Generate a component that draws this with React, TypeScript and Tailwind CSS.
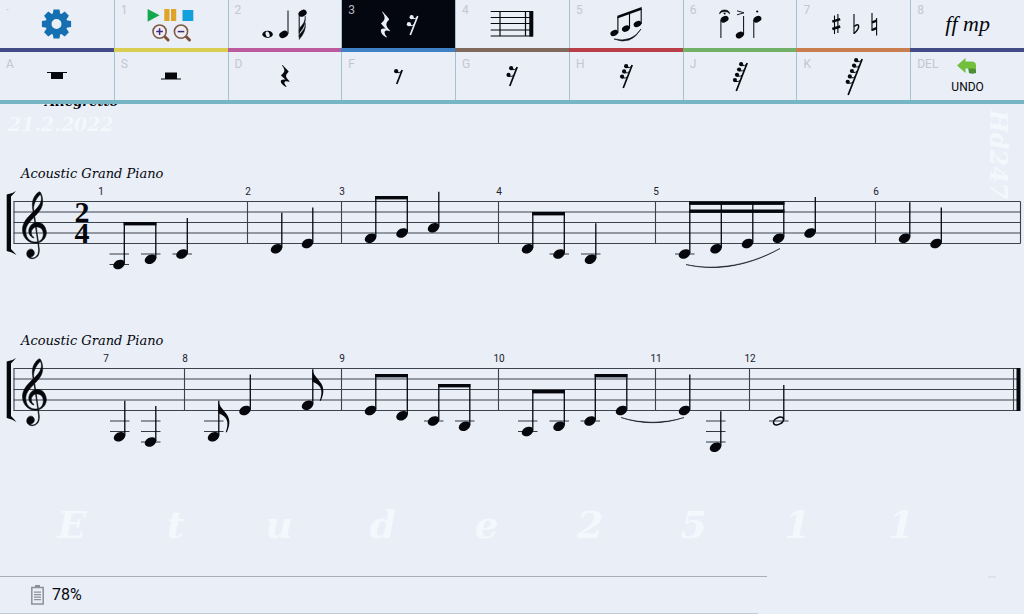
import type { ReactNode } from 'react';

type BeamGroup = { notes: number[]; tops: number[] };

interface Note {
  x: number;
  // Steps above the bottom staff line, negative below it
  step: number;
  kind?: 'quarter' | 'eighth' | 'half' | 'beamed';
}

interface System {
  notes: Note[];
  beams: BeamGroup[];
  barlines: number[];
  measures: { label: string; x: number }[];
  slur: string;
  timeSignature?: [string, string];
  final?: boolean;
}

interface Tool {
  hotkey: string;
  label: string;
  icon: ReactNode;
  line?: string;
  active?: boolean;
}

const STAFF_TOP = 17.5;
const STEP = 5.25;
const STEM = 36;
const noteY = (step: number) => STAFF_TOP + 8 * STEP - step * STEP;

const CLEF_PATH =
  'm12.049 3.5296c0.305 3.1263-2.019 5.6563-4.0772 7.7014-0.9349 0.897-0.155 0.148-0.6437 0.594-0.1022-0.479-0.2986-1.731-0.2802-2.11 0.1304-2.6939 2.3198-6.5875 4.2381-8.0236 0.309 0.5767 0.563 0.6231 0.763 1.8382zm0.651 16.142c-1.232-0.906-2.85-1.144-4.3336-0.885-0.1913-1.255-0.3827-2.51-0.574-3.764 2.3506-2.329 4.9066-5.0322 5.0406-8.5394 0.059-2.232-0.276-4.6714-1.678-6.4836-1.7004 0.12823-2.8995 2.156-3.8019 3.4165-1.4889 2.6705-1.1414 5.9169-0.57 8.7965-0.8094 0.952-1.9296 1.743-2.7274 2.734-2.3561 2.308-4.4085 5.43-4.0046 8.878 0.18332 3.334 2.5894 6.434 5.8702 7.227 1.2457 0.315 2.5639 0.346 3.8241 0.099 0.2199 2.25 1.0266 4.629 0.0925 6.813-0.7007 1.598-2.7875 3.004-4.3325 2.192-0.5994-0.316-0.1137-0.051-0.478-0.252 1.0698-0.257 1.9996-1.036 2.26-1.565 0.8378-1.464-0.3998-3.639-2.1554-3.358-2.262 0.046-3.1904 3.14-1.7356 4.685 1.3468 1.52 3.833 1.312 5.4301 0.318 1.8125-1.18 2.0395-3.544 1.8325-5.562-0.07-0.678-0.403-2.67-0.444-3.387 0.697-0.249 0.209-0.059 1.193-0.449 2.66-1.053 4.357-4.259 3.594-7.122-0.318-1.469-1.044-2.914-2.302-3.792zm0.561 5.757c0.214 1.991-1.053 4.321-3.079 4.96-0.136-0.795-0.172-1.011-0.2626-1.475-0.4822-2.46-0.744-4.987-1.116-7.481 1.6246-0.168 3.4576 0.543 4.0226 2.184 0.244 0.577 0.343 1.197 0.435 1.812zm-5.1486 5.196c-2.5441 0.141-4.9995-1.595-5.6343-4.081-0.749-2.153-0.5283-4.63 0.8207-6.504 1.1151-1.702 2.6065-3.105 4.0286-4.543 0.183 1.127 0.366 2.254 0.549 3.382-2.9906 0.782-5.0046 4.725-3.215 7.451 0.5324 0.764 1.9765 2.223 2.7655 1.634-1.102-0.683-2.0033-1.859-1.8095-3.227-0.0821-1.282 1.3699-2.911 2.6513-3.198 0.4384 2.869 0.9413 6.073 1.3797 8.943-0.5054 0.1-1.0211 0.143-1.536 0.143z';

const QUARTER_REST_PATH =
  'M2.6 0C4 2 8.6 7 8.7 7.8C8.6 9 6 10.5 6 13C6 15 8 17.4 9.7 19.4L9.3 19.8C6.5 18.6 4.6 19 4.4 20.8C4.3 22.5 5.4 24 6.6 25.4L6 26C3 24 .8 21.6 .8 19.4C.8 17.6 2.4 16.6 5.6 17.4C4 15.4 1.6 13.2 .9 12C2.6 10.8 4.4 8.6 4.4 6.6C4.4 4.4 3 2.2 2 .6Z';

const systems: System[] = [
  {
    notes: [
      { x: 119, step: -4, kind: 'beamed' },
      { x: 150.5, step: -3, kind: 'beamed' },
      { x: 182, step: -2 },
      { x: 276.5, step: -1 },
      { x: 307.5, step: 0 },
      { x: 370.5, step: 1, kind: 'beamed' },
      { x: 402, step: 2, kind: 'beamed' },
      { x: 433.5, step: 3 },
      { x: 527.5, step: -1, kind: 'beamed' },
      { x: 559, step: -2, kind: 'beamed' },
      { x: 590.5, step: -3 },
      { x: 684.5, step: -2, kind: 'beamed' },
      { x: 716, step: -1, kind: 'beamed' },
      { x: 747.5, step: 0, kind: 'beamed' },
      { x: 778.5, step: 1, kind: 'beamed' },
      { x: 810, step: 2 },
      { x: 904.5, step: 1 },
      { x: 936, step: 0 },
    ],
    beams: [
      { notes: [0, 1], tops: [38] },
      { notes: [5, 6], tops: [12] },
      { notes: [8, 9], tops: [28] },
      { notes: [11, 12, 13, 14], tops: [17.5, 25.5] },
    ],
    barlines: [247.5, 341.5, 498.5, 655.5, 875.5, 1020.5],
    measures: [
      { label: '1', x: 101 },
      { label: '2', x: 248 },
      { label: '3', x: 342 },
      { label: '4', x: 499 },
      { label: '5', x: 656 },
      { label: '6', x: 876 },
    ],
    slur: 'M686 80.5C710 86.5 744 85 780 64.5C744 84.2 710 85.7 686 80.5Z',
    timeSignature: ['2', '4'],
  },
  {
    notes: [
      { x: 119.5, step: -5 },
      { x: 150.5, step: -6 },
      { x: 213.5, step: -5, kind: 'eighth' },
      { x: 245, step: 0 },
      { x: 307.5, step: 1, kind: 'eighth' },
      { x: 370.5, step: 0, kind: 'beamed' },
      { x: 402, step: -1, kind: 'beamed' },
      { x: 433.5, step: -2, kind: 'beamed' },
      { x: 464.5, step: -3, kind: 'beamed' },
      { x: 527.5, step: -4, kind: 'beamed' },
      { x: 559, step: -3, kind: 'beamed' },
      { x: 590, step: -2, kind: 'beamed' },
      { x: 621.5, step: 0, kind: 'beamed' },
      { x: 684.5, step: 0 },
      { x: 715.5, step: -7 },
      { x: 778.5, step: -2, kind: 'half' },
    ],
    beams: [
      { notes: [5, 6], tops: [23] },
      { notes: [7, 8], tops: [33] },
      { notes: [9, 10], tops: [39] },
      { notes: [11, 12], tops: [23] },
    ],
    barlines: [184.5, 341.5, 498.5, 655.5, 749.5],
    measures: [
      { label: '7', x: 106 },
      { label: '8', x: 185 },
      { label: '9', x: 342 },
      { label: '10', x: 499 },
      { label: '11', x: 656 },
      { label: '12', x: 750 },
    ],
    slur: 'M621 66.5C641 73.5 664 73.5 684 66.5C664 72.7 641 72.7 621 66.5Z',
    final: true,
  },
];

function NoteHead({ x, y, r = 6.1 }: { x: number; y: number; r?: number }) {
  return <ellipse cx={x} cy={y} rx={r} ry={r * 0.72} transform={`rotate(-28 ${x} ${y})`} />;
}

function ScoreNote({ note, stemTop }: { note: Note; stemTop: number }) {
  const y = noteY(note.step);
  const stemX = note.x + 5.3;
  const ledgers: number[] = [];
  for (let s = -2; s >= note.step; s -= 2) ledgers.push(noteY(s));

  return (
    <g>
      {ledgers.map((ly) => (
        <path key={ly} d={`M${note.x - 9.5} ${ly}h19.5`} stroke="#333a44" strokeWidth={1} />
      ))}
      {note.kind === 'half' ? (
        <ellipse
          cx={note.x}
          cy={y}
          rx={5.4}
          ry={3.3}
          fill="none"
          stroke="#05070d"
          strokeWidth={1.6}
          transform={`rotate(-28 ${note.x} ${y})`}
        />
      ) : (
        <NoteHead x={note.x} y={y} />
      )}
      <path d={`M${stemX} ${y - 1}V${stemTop}`} stroke="#05070d" strokeWidth={1.3} />
      {note.kind === 'eighth' && (
        <path
          d={`M${stemX - 0.4} ${stemTop}c1.500 11 17 13 8.500 31.500h-1.200c4-11 1-16-7.300-19Z`}
        />
      )}
    </g>
  );
}

function Staff({ system }: { system: System }) {
  const bottom = STAFF_TOP + 8 * STEP;
  const end = system.final ? 1019.5 : 1020.5;

  const stemTopOf = (index: number) => {
    const beam = system.beams.find((b) => b.notes.includes(index));
    return beam ? beam.tops[0] : noteY(system.notes[index].step) - STEM;
  };

  return (
    <svg viewBox="0 0 1024 110" className="block w-full" fill="#05070d" role="img" aria-label="Staff">
      {/* Staff and bar lines */}
      <g stroke="#3c434d" strokeWidth={1.1}>
        {[0, 2, 4, 6, 8].map((i) => (
          <path key={i} d={`M13.500 ${STAFF_TOP + i * STEP}H${end}`} />
        ))}
        <path d={`M14 ${STAFF_TOP}V${bottom}`} />
        {system.barlines.map((x) => (
          <path key={x} d={`M${x} ${STAFF_TOP}V${bottom}`} />
        ))}
        {system.final && <path d={`M1013.500 ${STAFF_TOP}V${bottom}`} />}
      </g>
      {system.final && <rect x={1016.5} y={STAFF_TOP - 0.5} width={4} height={43} />}

      {/* Bracket and clef */}
      <path d="M6.700 10.500Q12 10 16 7Q13 10.500 11 12.500V65Q13 67 16.500 71Q12 68 6.700 67Z" />
      <path d={CLEF_PATH} transform="translate(22.500 7.800) scale(1.570 1.640)" stroke="#05070d" strokeWidth={0.35} />
      {system.timeSignature && (
        <g fontFamily="Liberation Serif, serif" fontWeight="bold" fontSize={30} textAnchor="middle">
          <text x={82} y={38}>{system.timeSignature[0]}</text>
          <text x={82} y={59}>{system.timeSignature[1]}</text>
        </g>
      )}

      <g fontFamily="Roboto, sans-serif" fontSize={10} textAnchor="middle" fill="#1d2129">
        {system.measures.map((m) => (
          <text key={m.label} x={m.x} y={11}>{m.label}</text>
        ))}
      </g>

      {system.notes.map((note, i) => (
        <ScoreNote key={note.x} note={note} stemTop={stemTopOf(i)} />
      ))}
      {system.beams.map((beam) =>
        beam.tops.map((top) => {
          const from = system.notes[beam.notes[0]].x + 4.7;
          const to = system.notes[beam.notes[beam.notes.length - 1]].x + 5.9;
          return <rect key={`${from}-${top}`} x={from} y={top} width={to - from} height={3.4} />;
        })
      )}
      <path d={system.slur} stroke="#05070d" strokeWidth={0.5} />
    </svg>
  );
}

// Slanted rest with one hook per flag
function FlaggedRest({ flags, gap, width, height }: { flags: number; gap: number; width: number; height: number }) {
  const topX = width - 0.8;
  const slope = 0.39;
  return (
    <g fill="currentColor" stroke="currentColor">
      <path d={`M${topX} 1L${topX - slope * (height - 1)} ${height}`} strokeWidth={1.7} fill="none" />
      {Array.from({ length: flags }, (_, i) => {
        const y = 2.2 + i * gap;
        const stemX = topX - slope * (y - 1);
        const x = stemX - 5.6;
        return (
          <g key={i}>
            <circle cx={x} cy={y} r={2.1} stroke="none" />
            <path d={`M${x} ${y + 1.4}Q${x + 4} ${y + 2} ${stemX} ${y}`} strokeWidth={1} fill="none" />
          </g>
        );
      })}
    </g>
  );
}

function RestIcon(props: { flags: number; gap: number; width: number; height: number }) {
  return (
    <svg width={props.width} height={props.height} viewBox={`0 0 ${props.width} ${props.height}`} overflow="visible">
      <FlaggedRest {...props} />
    </svg>
  );
}

function Icon({ children }: { children: ReactNode }) {
  return (
    <svg width="60" height="40" viewBox="0 0 60 40" fill="currentColor">
      {children}
    </svg>
  );
}

const Magnifier = ({ x, plus }: { x: number; plus?: boolean }) => (
  <g fill="none">
    <path d={`M${x + 4.5} 32l4 4`} stroke="#7d4f3a" strokeWidth={3} strokeLinecap="round" />
    <circle cx={x} cy={27.6} r={6.6} stroke="#7d5a45" strokeWidth={1.6} fill="#f1eef2" />
    <path d={plus ? `M${x - 3.3} 27.600h6.600M${x} 24.300v6.600` : `M${x - 3.3} 27.600h6.600`} stroke="#3d2a80" strokeWidth={1.5} />
  </g>
);

const topTools: Tool[] = [
  {
    hotkey: '·',
    label: 'Settings',
    line: 'border-[#434b88]',
    icon: (
      <Icon>
        <g fill="#1470b0">
          {[0, 45, 90, 135].map((a) => (
            <path key={a} d="M26.500 5.400h6l.8 5h-7.600zM26.500 34.600h6l.8-5h-7.600z" transform={`rotate(${a} 29.5 20)`} />
          ))}
        </g>
        <circle cx="29.5" cy="20" r="8" fill="none" stroke="#1470b0" strokeWidth="6" />
      </Icon>
    ),
  },
  {
    hotkey: '1',
    label: 'Playback and zoom',
    line: 'border-[#d9cd52]',
    icon: (
      <Icon>
        <path d="M6.600 5L18.500 11.300L6.600 17.700Z" fill="#14a84c" />
        <path d="M23.300 5h5.200v12h-5.200zM30 5h5.200v12H30z" fill="#dfa32a" />
        <path d="M41.500 6h10.800v11H41.500z" fill="#139fdb" />
        <Magnifier x={18.6} plus />
        <Magnifier x={40} />
      </Icon>
    ),
  },
  {
    hotkey: '2',
    label: 'Notes',
    line: 'border-[#bb5a9c]',
    icon: (
      <Icon>
        <ellipse cx="12.6" cy="30.3" rx="5.200" ry="3.600" />
        <ellipse cx="12.6" cy="30.3" rx="1.900" ry="2.900" fill="#e9eef7" transform="rotate(-20 12.6 30.3)" />
        <NoteHead x={28.6} y={30.3} r={4.6} />
        <path d="M33 30V6.500M44.200 9.500V33" stroke="currentColor" />
        <NoteHead x={47.6} y={9.2} r={4.3} />
        <path d="M44.200 26c1-5 6-5 6-14q1.500 9-6 17zM44.200 32.500c1-5 6.500-6 6-13.500q1.500 8-6 16.500z" stroke="currentColor" strokeWidth=".4" />
      </Icon>
    ),
  },
  {
    hotkey: '3',
    label: 'Rests',
    line: 'border-[#3f81c5]',
    active: true,
    icon: (
      <Icon>
        <path d={QUARTER_REST_PATH} transform="translate(11 7.500) scale(1.050 1)" />
        <g transform="translate(37.500 11)">
          <FlaggedRest flags={2} gap={7} width={12} height={20} />
        </g>
      </Icon>
    ),
  },
  {
    hotkey: '4',
    label: 'Bar lines',
    line: 'border-[#80695c]',
    icon: (
      <Icon>
        <path d="M8.700 7.500H51M8.700 13.500H51M8.700 19.500H51M8.700 26H51M8.700 32H51M18 7v25.500M43.500 7v25.500" stroke="currentColor" strokeWidth="1.200" />
        <rect x="47.3" y="7" width="4" height="25.5" />
      </Icon>
    ),
  },
  {
    hotkey: '5',
    label: 'Beams and slurs',
    line: 'border-[#b83f48]',
    icon: (
      <Icon>
        <NoteHead x={18.2} y={29} r={4} />
        <NoteHead x={29.8} y={24.6} r={4} />
        <NoteHead x={41.5} y={20} r={4} />
        <path d="M21.900 29V13M33.500 24.500V9M45.200 20V5" stroke="currentColor" strokeWidth="1.100" />
        <path d="M21.400 11.800L45.700 3v2.800L21.400 14.600Z" />
        <path d="M18 35Q35 42 45 25Q36 39 18 35Z" stroke="currentColor" strokeWidth=".6" />
      </Icon>
    ),
  },
  {
    hotkey: '6',
    label: 'Articulations',
    line: 'border-[#71b067]',
    icon: (
      <Icon>
        <NoteHead x={14.6} y={15.2} r={4.2} />
        <NoteHead x={29.8} y={31} r={4.2} />
        <NoteHead x={47.4} y={15.2} r={4.2} />
        <path d="M10.900 16V34M33.600 31V12M43.800 16V34" stroke="currentColor" strokeWidth="1" />
        <path d="M9.500 9.800Q10 6 14.600 6T19.700 9.800Q18 7.500 14.600 7.500T9.500 9.800Z" stroke="currentColor" strokeWidth=".6" />
        <circle cx="14.6" cy="9.4" r="1" />
        <circle cx="47.2" cy="7.5" r="1.100" />
        <path d="M27 6.800L34 8.800L27 10.800" fill="none" stroke="currentColor" strokeWidth=".9" />
      </Icon>
    ),
  },
  {
    hotkey: '7',
    label: 'Accidentals',
    line: 'border-[#ca7e4f]',
    icon: (
      <Icon>
        <g fill="none" stroke="currentColor">
          <path d="M10.500 11.500V30M13.900 10V29M30 10V30M48 9V27M52.600 14V31.500" strokeWidth="1.100" />
          <path d="M8.300 17.700L16.200 15.200M8.300 25L16.200 22.500M48 18.500L52.600 16.700M48 26L52.600 24.200" strokeWidth="2.400" />
          <path d="M30 22.500Q34.500 19 34.700 22.500Q34.500 25.500 30 29.500" strokeWidth="1.500" />
        </g>
      </Icon>
    ),
  },
  {
    hotkey: '8',
    label: 'Dynamics',
    line: 'border-[#434b88]',
    icon: (
      <span className="font-['Liberation_Serif',serif] text-[22px] leading-6 italic">ff mp</span>
    ),
  },
];

const restTools: Tool[] = [
  {
    hotkey: 'A',
    label: 'Whole rest',
    icon: (
      <svg width="20" height="8" fill="currentColor">
        <path d="M0 0h20v1H0zM4 1h12v6H4z" />
      </svg>
    ),
  },
  {
    hotkey: 'S',
    label: 'Half rest',
    icon: (
      <svg width="20" height="8" fill="currentColor">
        <path d="M0 6.500h20v1H0zM4 .5h12v6H4z" />
      </svg>
    ),
  },
  {
    hotkey: 'D',
    label: 'Quarter rest',
    icon: (
      <svg width="10" height="22" viewBox="0 0 10 26" preserveAspectRatio="none" fill="currentColor">
        <path d={QUARTER_REST_PATH} />
      </svg>
    ),
  },
  { hotkey: 'F', label: 'Eighth rest', icon: <RestIcon flags={1} gap={6} width={9} height={15} /> },
  { hotkey: 'G', label: 'Sixteenth rest', icon: <RestIcon flags={2} gap={6.7} width={12} height={20} /> },
  { hotkey: 'H', label: 'Thirty-second rest', icon: <RestIcon flags={3} gap={5.2} width={13} height={24} /> },
  { hotkey: 'J', label: 'Sixty-fourth rest', icon: <RestIcon flags={4} gap={5.3} width={15} height={29} /> },
  { hotkey: 'K', label: 'Hundred twenty-eighth rest', icon: <RestIcon flags={5} gap={5.4} width={19} height={37} /> },
  {
    hotkey: 'DEL',
    label: 'Undo',
    icon: (
      <span className="flex flex-col items-center gap-1">
        <svg width="24" height="18" viewBox="0 0 24 18">
          <path d="M12 10h8v6q-4 1.500-7 0z" fill="#4c8f35" />
          <path d="M1 8.500L9.500 1v3.500h6q4.500 0 4.500 4v4q-1-1-3.500-1h-7V16z" fill="#72bf3c" />
        </svg>
        <span className="text-xs leading-4">UNDO</span>
      </span>
    ),
  },
];

function ToolButton({ tool, raised }: { tool: Tool; raised?: boolean }) {
  return (
    <button
      type="button"
      aria-label={tool.label}
      aria-pressed={tool.active}
      className={`
        relative flex items-center justify-center border-l border-l-[#a3c3d3] first:border-l-0
        ${tool.active ? 'bg-[#04070f] text-[#e9eef7]' : 'text-[#05070d]'}
      `}
    >
      <span
        className={`
          absolute left-1.5 text-xs leading-4
          ${raised ? 'top-0.5' : 'top-1'}
          ${tool.active ? 'text-[#b5b9c2]' : 'text-[#c3c7d1]'}
        `}
      >
        {tool.hotkey}
      </span>
      {tool.icon}
    </button>
  );
}

function Toolbar() {
  return (
    <header className="border-b-4 border-[#78b5c4]">
      <div className="grid h-12 grid-cols-9">
        {topTools.map((tool) => (
          <ToolButton key={tool.hotkey} tool={tool} raised />
        ))}
      </div>
      <div className="grid grid-cols-9">
        {topTools.map((tool) => (
          <div key={tool.hotkey} className={`border-b-4 ${tool.line}`} />
        ))}
      </div>
      <div className="grid h-12 grid-cols-9">
        {restTools.map((tool) => (
          <ToolButton key={tool.hotkey} tool={tool} />
        ))}
      </div>
    </header>
  );
}

export default function App() {
  return (
    <div className="flex min-h-screen flex-col bg-[#e9eef7] font-['Roboto',sans-serif] text-[#05070d]">
      <Toolbar />

      <main className="relative flex-1 font-['DejaVu_Serif',serif]">
        {/* Tempo mark, scrolled under the toolbar */}
        <div className="flex h-1.5 items-end overflow-hidden pl-[45px]">
          <p className="text-[13px] leading-4 font-bold italic">Allegretto</p>
        </div>
        <p className="pl-2 text-[19px] leading-7 font-bold text-[#f4f7fc] italic">21.2.2022</p>
        <p className="absolute top-1.5 right-3 text-2xl leading-7 font-bold text-[#f4f7fc] italic [writing-mode:vertical-rl]">
          Hd247
        </p>

        <div className="flex flex-col gap-[37px] pt-[26px]">
          {systems.map((system, i) => (
            <section key={i}>
              <h2 className="pl-[21px] text-[13px] leading-5 italic">Acoustic Grand Piano</h2>
              <Staff system={system} />
            </section>
          ))}
        </div>

        <div className="mt-10 grid grid-cols-9 pr-[71px] pl-5 text-center text-[38px] leading-12 font-bold text-[#f4f7fc] italic">
          {'Etude2511'.split('').map((char, i) => (
            <span key={i}>{char}</span>
          ))}
        </div>
      </main>

      <footer>
        <div className="flex justify-between pr-7">
          <div className="flex h-[37px] w-[77%] items-center gap-2 border-t border-[#a9aeb8] pl-[31px]">
            <svg width="13" height="20" viewBox="0 0 13 20" fill="#8d909a">
              <path d="M4 0h5v2H4z" />
              <path d="M.8 2.500h11.400v16.500H.8z" fill="none" stroke="#8d909a" strokeWidth="1.500" />
              <path d="M3 6.500h7v1.300H3zM3 9h7v1.300H3zM3 11.500h7v1.300H3zM3 14h7v1.300H3z" />
            </svg>
            <span className="text-base leading-6">78%</span>
          </div>
          <div className="h-0.5 w-2 bg-[#dde2ee]" />
        </div>
        <div className="h-px w-[74%] bg-[#c3c9d9]" />
      </footer>
    </div>
  );
}
